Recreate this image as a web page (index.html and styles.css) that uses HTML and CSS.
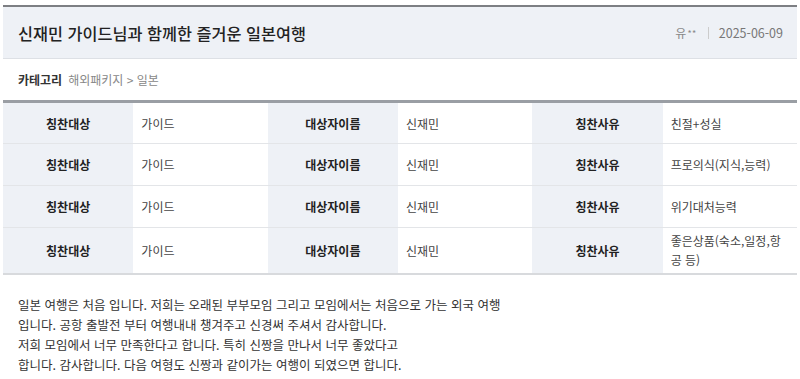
FILE: index.html
```html
<!DOCTYPE html>
<html lang="ko">
<head>
<meta charset="utf-8">
<link rel="stylesheet" href="styles.css">
</head>
<body>
<div class="wrap">
  <div class="head">
    <h1 class="title">신재민 가이드님과 함께한 즐거운 일본여행</h1>
    <div class="meta"><span class="writer">유<span class="star">**</span></span><span class="sep"></span><span class="date">2025-06-09</span></div>
  </div>
  <div class="cate"><strong>카테고리</strong><span class="path">해외패키지 &gt; 일본</span></div>
  <table class="info">
    <colgroup>
      <col class="c-th"><col class="c-td"><col class="c-th"><col class="c-td"><col class="c-th"><col class="c-td">
    </colgroup>
    <tr><th>칭찬대상</th><td>가이드</td><th>대상자이름</th><td>신재민</td><th>칭찬사유</th><td>친절+성실</td></tr>
    <tr><th>칭찬대상</th><td>가이드</td><th>대상자이름</th><td>신재민</td><th>칭찬사유</th><td>프로의식(지식,능력)</td></tr>
    <tr><th>칭찬대상</th><td>가이드</td><th>대상자이름</th><td>신재민</td><th>칭찬사유</th><td>위기대처능력</td></tr>
    <tr class="tall"><th>칭찬대상</th><td>가이드</td><th>대상자이름</th><td>신재민</td><th>칭찬사유</th><td>좋은상품(숙소,일정,항공 등)</td></tr>
  </table>
  <div class="content">
    일본 여행은 처음 입니다. 저희는 오래된 부부모임 그리고 모임에서는 처음으로 가는 외국 여행<br>
    입니다. 공항 출발전 부터 여행내내 챙겨주고 신경써 주셔서 감사합니다.<br>
    저희 모임에서 너무 만족한다고 합니다. 특히 신짱을 만나서 너무 좋았다고<br>
    합니다. 감사합니다. 다음 여형도 신짱과 같이가는 여행이 되였으면 합니다.
  </div>
</div>
</body>
</html>
```

FILE: styles.css
```css
html, body { margin: 0; padding: 0; background: #fff; }
body { font-family: "Noto Sans CJK KR", "Noto Sans", sans-serif; color: #333; }
.wrap { padding: 5px 3px 0; }
.head {
  display: flex; align-items: center; justify-content: space-between;
  height: 51px; background: #eef1f6;
  border-top: 2px solid #7d7f83; border-bottom: 1px solid #dde0e5;
  padding: 0 14px 0 15px;
}
.title { margin: 0; font-size: 16.3px; font-weight: 500; color: #222; }
.meta { display: flex; align-items: center; font-size: 12.5px; color: #888; }
.writer { font-size: 12px; }
.star { font-size: 9px; vertical-align: 1px; letter-spacing: 0.5px; margin-left: 1px; }
.sep { width: 1px; height: 12px; background: #ccc; margin: 0 10px 0 11px; }
.date { color: #777; }
.cate { display: flex; align-items: center; height: 41px; padding-left: 15px; font-size: 12px; }
.cate strong { font-weight: 700; color: #333; margin-right: 6px; }
.path { color: #888; }
.info {
  width: 100%; border-collapse: collapse; font-size: 12px;
  border-top: 3px solid #9a9ea4; border-bottom: 2px solid #d8dadd;
}
.c-th { width: 16.4%; }
.c-td { width: 16.9%; }
.info tr { height: 42px; }
.info tr.tall { height: 46px; }
.info tr + tr th, .info tr + tr td { border-top: 1px solid #e3e5e8; }
.info th { background: #eef1f6; font-weight: 700; color: #222; text-align: center; }
.info td { background: #fff; color: #444; padding: 2px 8px; line-height: 19px; word-break: break-all; }
.content { padding: 20px 15px 0; font-size: 12.5px; line-height: 20px; color: #333; }
```
